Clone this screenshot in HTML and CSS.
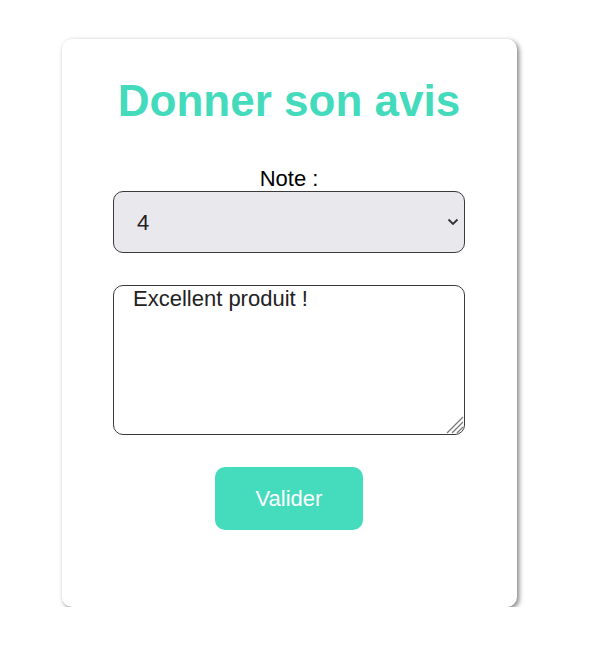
FILE: index.html
```html
<!DOCTYPE html>
<html lang="fr">
<head>
<meta charset="utf-8">
<title>Donner son avis</title>
<link rel="stylesheet" href="styles.css">
</head>
<body>
<form class="card">
  <h1 class="title">Donner son avis</h1>
  <label class="label" for="note">Note :</label>
  <div class="field">
    <select class="select" id="note">
      <option>1</option>
      <option>2</option>
      <option>3</option>
      <option selected>4</option>
      <option>5</option>
    </select>
    <svg class="chevron" width="12" height="8" viewBox="0 0 12 8" aria-hidden="true">
      <path d="M1.5 1.5 L6 6 L10.5 1.5" fill="none" stroke="#333" stroke-width="1.8"/>
    </svg>
  </div>
  <div class="field field-area">
    <textarea class="textarea">Excellent produit !</textarea>
    <svg class="grip" width="20" height="20" viewBox="0 0 20 20" aria-hidden="true">
      <path d="M19 3 L3 19 M19 8 L8 19 M19 13 L13 19" fill="none" stroke="#777" stroke-width="1.2"/>
    </svg>
  </div>
  <button class="button" type="button">Valider</button>
</form>
</body>
</html>
```

FILE: styles.css
```css
* { box-sizing: border-box; }
html, body { background: #fff; }
body {
  margin: 0;
  padding: 39px 0 0 62px;
  font-family: "Liberation Sans", Arial, sans-serif;
}
.card {
  width: 455px;
  height: 568px;
  background: #fff;
  border-radius: 10px;
  box-shadow: 2px 2px 5px rgba(0,0,0,0.5);
  padding: 37px 52px 0 51px;
  display: flex;
  flex-direction: column;
  align-items: center;
}
.title {
  margin: 0;
  font-size: 44px;
  line-height: 50px;
  font-weight: bold;
  color: #43dbbc;
}
.label {
  margin-top: 40px;
  font-size: 22px;
  line-height: 25px;
  color: #000;
}
.field {
  position: relative;
  width: 352px;
}
.field-area {
  margin-top: 32px;
}
.select {
  display: block;
  width: 352px;
  height: 62px;
  border: 1px solid #3a3a3a;
  border-radius: 10px;
  background: #e9e8ed;
  font-family: "Liberation Sans", Arial, sans-serif;
  font-size: 22px;
  color: #222;
  padding: 0 23px;
  -webkit-appearance: none;
  appearance: none;
}
.chevron {
  position: absolute;
  right: 6px;
  top: 27px;
  pointer-events: none;
}
.textarea {
  display: block;
  width: 352px;
  height: 150px;
  border: 1px solid #3a3a3a;
  border-radius: 10px;
  font-family: "Liberation Sans", Arial, sans-serif;
  font-size: 22px;
  line-height: 25px;
  color: #222;
  padding: 0 19px;
  resize: none;
}
.grip {
  position: absolute;
  right: 1px;
  bottom: 1px;
  pointer-events: none;
}
.button {
  margin-top: 32px;
  width: 148px;
  height: 63px;
  border: none;
  border-radius: 10px;
  background: #45dbbd;
  color: #fff;
  font-family: "Liberation Sans", Arial, sans-serif;
  font-size: 22px;
}
```
